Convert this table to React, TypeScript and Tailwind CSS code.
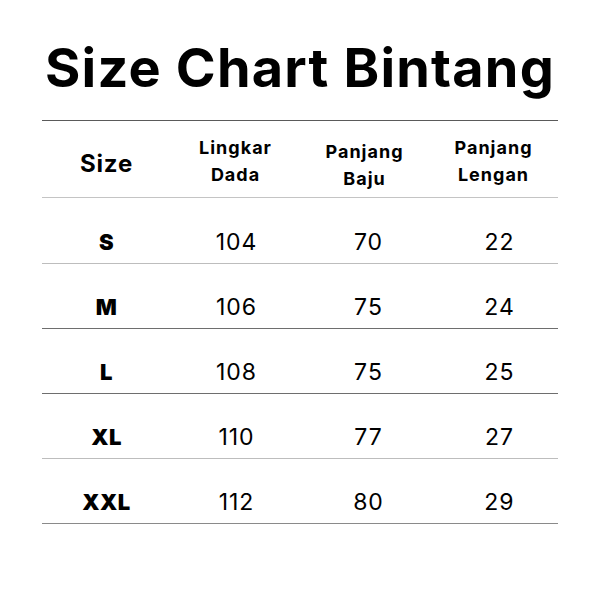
import React from "react";

const rows = [
  { s: "S", a: "104", b: "70", c: "22", line: "border-[#bdbdbd]", h: "h-[66px]" },
  { s: "M", a: "106", b: "75", c: "24", line: "border-[#6e6e6e]", h: "h-[65px]" },
  { s: "L", a: "108", b: "75", c: "25", line: "border-[#6e6e6e]", h: "h-[65px]" },
  { s: "XL", a: "110", b: "77", c: "27", line: "border-[#bdbdbd]", h: "h-[65px]" },
  { s: "XXL", a: "112", b: "80", c: "29", line: "border-[#8a8a8a]", h: "h-[65px]" },
];

export default function App() {
  return (
    <div className="w-[600px] h-[600px] bg-white text-black font-['Inter',sans-serif] flex flex-col items-center">
      <h1 className="mt-[40px] text-[54px] leading-[56px] font-bold tracking-[1.2px]">Size Chart Bintang</h1>
      <div className="mt-[24px] w-[516px] border-t border-[#5a5a5a]">
        <div className="grid grid-cols-4 h-[77px] border-b border-[#c4c4c4] font-bold items-center text-center">
          <div className="text-[24px] tracking-[0.8px] pt-[10px]">Size</div>
          <div className="text-[18px] tracking-[1px] leading-[27px] mt-[4px]">Lingkar<br />Dada</div>
          <div className="text-[18px] tracking-[1px] leading-[27px] pt-[11px]">Panjang<br />Baju</div>
          <div className="text-[18px] tracking-[1px] leading-[27px] mt-[4px]">Panjang<br />Lengan</div>
        </div>
        {rows.map((r) => (
          <div key={r.s} className={`grid grid-cols-4 ${r.h} border-b ${r.line} items-end pb-[4px] text-center`}>
            <div className="text-[22px] font-black tracking-[0.5px]">{r.s}</div>
            <div className="text-[23px] tracking-[1px] pl-[2px]">{r.a}</div>
            <div className="text-[23px] tracking-[1px] pl-[8px]">{r.b}</div>
            <div className="text-[23px] tracking-[1px] pl-[12px]">{r.c}</div>
          </div>
        ))}
      </div>
    </div>
  );
}
